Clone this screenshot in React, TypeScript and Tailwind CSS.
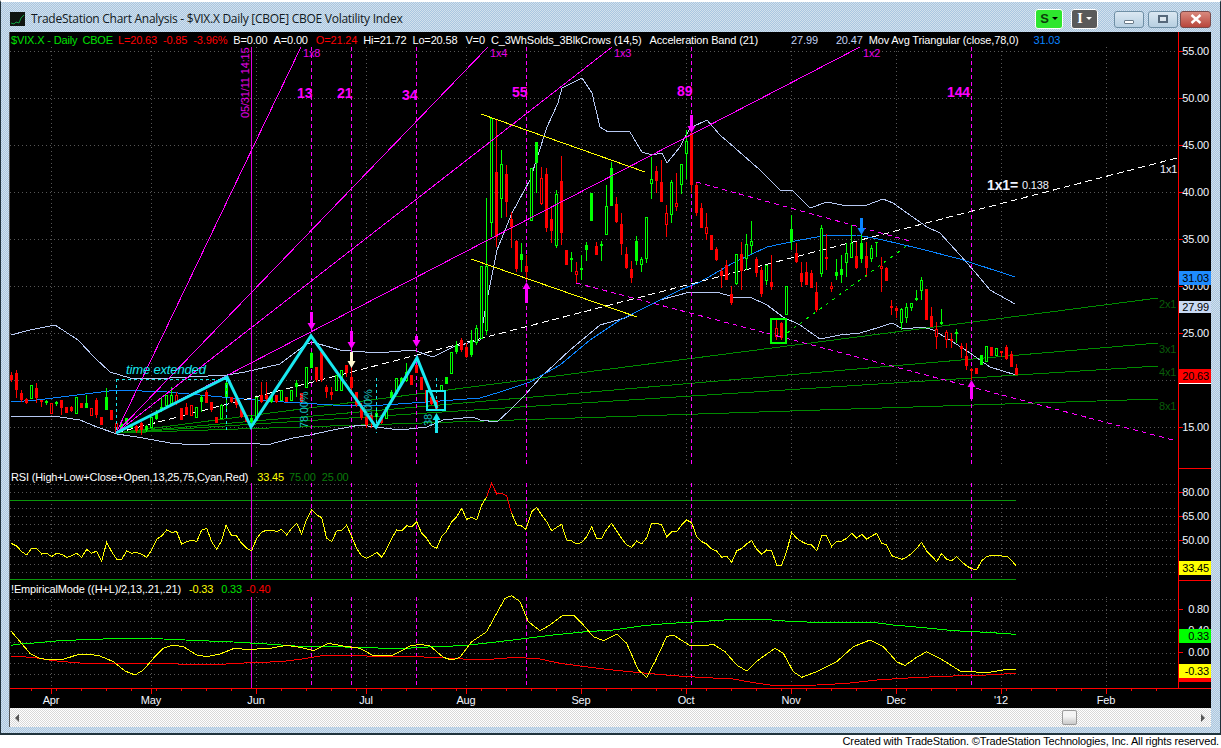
import React from "react";

type Candle = [number, number, number, number, number, number];
// x, high, low, bodyTop, bodyBottom, kind (0 solid red, 1 hollow red, 2 solid green, 3 hollow green)
const CANDLES: Candle[] = [
  [11,372,382,375,380,0],[16,370,398,373,390,0],[21,390,402,393,400,0],[26,398,404,399,403,0],[31,385,398,385,398,3],[36,383,403,388,398,0],
  [41,400,407,400,402,0],[46,400,405,401,403,2],[51,403,413,403,413,1],[56,401,406,402,404,2],[61,400,415,400,408,0],[66,407,413,407,413,0],
  [71,406,412,407,411,0],[76,397,413,397,413,3],[81,403,408,403,408,0],[86,395,408,403,408,2],[91,408,415,408,415,1],[96,398,418,400,415,0],
  [101,417,425,417,425,0],[106,388,410,397,410,2],[111,410,420,410,420,0],[116,423,432,423,432,1],[121,421,430,424,428,2],[126,418,424,418,424,2],
  [131,424,428,424,428,2],[136,425,433,426,431,0],[141,422,435,423,430,0],[146,425,432,426,430,2],[151,417,427,417,427,3],[156,410,420,412,419,2],
  [161,397,412,407,411,2],[166,395,405,395,405,3],[171,387,405,395,403,3],[176,392,405,395,402,1],[181,408,420,408,420,0],[186,403,415,407,415,0],
  [191,405,415,405,415,1],[196,407,417,407,417,3],[201,395,412,397,402,2],[206,390,403,392,403,0],[211,402,412,402,410,0],[216,417,423,417,423,0],
  [221,404,418,405,418,3],[226,378,412,383,397,2],[231,397,403,397,402,0],[236,397,408,398,405,0],[241,408,418,408,417,0],[246,415,422,415,422,0],
  [251,415,426,418,422,2],[256,397,420,397,420,3],[261,382,403,395,402,0],[266,382,403,395,399,0],[271,395,403,396,402,2],[276,395,403,395,402,0],
  [281,390,400,390,400,3],[286,397,402,397,402,0],[291,390,400,390,400,3],[296,380,397,383,387,2],[301,393,403,393,402,0],[306,367,387,367,387,3],
  [311,352,368,353,368,2],[316,367,382,367,380,0],[321,352,382,352,380,0],[326,385,398,387,392,0],[331,387,400,392,395,0],[336,375,390,375,390,3],
  [341,370,390,370,390,3],[346,365,377,365,373,0],[351,363,390,377,388,0],[356,392,407,392,405,0],[361,403,420,405,418,0],[366,415,428,417,425,0],
  [371,413,428,415,420,0],[376,407,420,413,417,2],[381,417,424,418,423,0],[386,407,418,407,418,3],[391,390,400,392,398,2],[396,378,393,378,393,3],
  [401,377,385,378,384,2],[406,363,382,372,380,3],[411,375,385,375,385,0],[416,365,373,365,373,0],[421,377,390,377,390,0],[426,390,403,390,403,0],
  [431,397,405,397,404,0],[436,400,410,400,410,0],[441,385,390,385,390,3],[446,377,384,377,384,2],[451,352,373,352,373,3],[456,341,354,345,352,2],
  [461,338,352,340,350,0],[466,343,358,347,357,0],[471,330,357,340,355,2],[476,325,345,328,342,3],[481,266,338,266,338,3],[486,198,335,266,330,3],
  [491,118,237,118,222,3],[496,120,247,172,237,0],[501,150,218,164,198,3],[506,165,217,174,202,0],[511,212,248,219,227,0],[516,240,272,241,269,0],
  [521,243,272,254,260,2],[526,255,280,266,272,0],[531,168,220,168,220,3],[536,142,193,142,163,2],[541,167,205,178,203,1],[546,168,232,174,228,0],
  [551,208,243,219,231,0],[556,190,248,194,245,3],[561,156,245,181,233,0],[566,250,265,250,265,0],[571,252,272,258,260,2],[576,262,283,271,274,1],
  [581,255,280,268,270,2],[586,242,261,245,250,2],[591,193,221,193,221,2],[596,242,255,246,255,0],[601,241,261,244,246,2],[606,185,235,206,234,3],
  [611,162,206,168,206,2],[616,197,223,204,222,0],[621,213,255,224,244,0],[626,247,269,254,268,0],[631,261,283,269,278,0],[636,236,265,241,261,2],
  [641,257,272,259,264,3],[646,217,263,217,258,3],[651,157,199,179,183,3],[656,166,193,171,181,0],[661,160,202,182,202,0],[666,205,237,213,224,1],
  [671,180,223,182,214,3],[676,173,211,203,206,1],[681,164,194,164,184,3],[686,130,179,141,153,3],[691,115,193,133,185,0],[696,182,216,185,213,0],
  [701,203,228,208,228,0],[706,213,240,227,233,1],[711,235,250,235,250,0],[716,247,261,249,260,0],[721,268,288,271,276,0],[726,260,280,265,280,0],
  [731,286,305,294,303,0],[736,254,285,254,283,3],[741,242,290,254,271,0],[746,234,270,244,258,3],[751,221,254,241,245,3],[756,257,277,259,273,0],
  [761,267,297,270,294,0],[766,265,285,265,280,3],[771,255,290,282,287,0],[776,319,340,328,336,1],[781,322,340,323,338,0],[786,286,314,286,314,3],
  [791,215,250,229,242,2],[796,243,263,253,262,0],[801,262,287,273,282,0],[806,262,285,272,285,0],[811,270,288,273,288,0],[816,282,312,292,310,0],
  [821,225,277,228,273,3],[826,234,270,257,259,0],[831,282,292,286,288,1],[836,259,280,272,276,2],[841,255,283,269,275,2],[846,243,277,253,262,3],
  [851,225,258,243,257,3],[856,242,269,256,268,0],[861,218,263,243,259,2],[866,242,277,256,268,0],[871,245,262,248,258,3],[876,242,257,242,243,2],
  [881,257,292,266,268,1],[886,267,281,268,281,0],[891,300,315,306,308,0],[896,306,318,308,311,0],[901,308,330,309,322,3],[906,303,323,307,317,3],
  [911,303,311,303,307,3],[916,290,301,298,300,2],[921,277,300,280,290,3],[926,289,320,289,320,0],[931,307,327,316,327,0],[936,322,349,329,336,1],
  [941,309,325,322,324,2],[946,330,348,332,339,1],[951,333,348,339,341,0],[956,329,343,332,334,2],[961,343,358,346,349,0],[966,343,370,356,366,0],
  [971,368,380,369,371,0],[976,368,374,368,374,0],[981,355,365,355,365,2],[986,346,361,346,361,3],[991,347,356,347,356,0],[996,348,355,348,355,3],
  [1001,351,357,351,353,0],[1006,345,360,347,359,0],[1011,351,367,354,367,0],[1016,364,375,368,375,0],
];

const zz = (x0: number, y0: number, a: number[][]) => a.map(([x, y]) => `${x0 + x / 3},${y0 + y / 3}`).join(" ");
const raw = (a: number[][]) => a.map(([x, y]) => `${x},${y}`).join(" ");

const UPPER = [[11,335],[30,330],[55,325],[78,340],[95,358],[110,372],[130,378],[170,378],[227,375],[245,372],[280,364],[305,345],[312,342],[340,350],[377,353],[413,350],[433,357],[453,347],[480,340],[487,300],[497,250],[512,213],[530,180],[547,127],[558,103],[562,88],[582,78],[592,93],[600,127],[608,132],[622,131],[630,132],[642,152],[652,155],[662,153],[667,163],[680,147],[690,128],[707,120],[720,135],[735,148],[760,170],[780,190],[792,190],[810,208],[827,202],[847,206],[867,205],[883,199],[893,203],[907,213],[927,227],[940,233],[960,255],[975,272],[990,290],[1015,304]];
const LOWER = [[11,416],[40,416],[60,417],[80,420],[97,427],[117,434],[143,438],[170,443],[193,445],[227,443],[253,443],[267,445],[293,438],[310,435],[333,430],[360,425],[400,430],[427,427],[443,420],[473,417],[480,420],[497,422],[510,410],[525,395],[540,378],[570,350],[600,325],[625,318],[640,310],[660,300],[690,292],[717,292],[733,297],[750,297],[767,305],[783,317],[800,325],[820,339],[840,335],[860,333],[877,328],[892,323],[903,329],[923,327],[933,330],[950,340],[970,353],[990,367],[1016,375]];
const BLUE = [[11,402],[37,400],[117,390],[167,392],[233,398],[267,401],[333,405],[383,405],[427,402],[480,398],[500,392],[530,382],[560,365],[590,340],[620,320],[650,305],[680,290],[700,282],[733,263],[767,247],[800,240],[823,236],[857,235],[883,240],[917,248],[960,259],[1015,277]];

const RSI_A = [[33,220],[50,228],[65,245],[80,255],[95,235],[110,235],[125,252],[140,250],[155,260],[170,250],[185,253],[200,262],[215,257],[230,250],[245,262],[260,238],[275,250],[290,243],[305,273],[320,217],[335,245],[350,268],[365,268],[380,243],[395,250],[410,247],[425,253],[440,262],[455,240],[470,208],[485,198],[500,180],[515,187],[530,185],[545,222],[560,215],[575,210],[590,215],[605,180],[620,175],[635,215],[650,238],[665,212],[678,165],[695,197],[710,198],[725,220],[740,235],[755,242],[770,205],[785,187],[800,180],[815,180],[830,185],[845,178],[860,195],[875,175],[890,160],[905,192],[920,148],[935,118],[950,135],[965,143],[980,205],[995,215],[1010,183],[1025,182],[1040,165],[1055,200],[1070,235],[1085,258],[1100,265],[1115,257],[1130,247],[1145,262],[1160,237],[1175,205],[1190,180],[1205,183],[1220,167],[1235,170],[1250,155],[1265,190],[1280,205],[1295,228],[1310,235],[1325,200],[1340,183],[1355,155],[1370,140],[1385,115],[1400,148],[1415,142],[1430,150],[1445,105],[1460,80]];
const RSI_R = [[1460,80],[1475,40],[1490,72],[1505,70],[1520,78],[1535,130]];
const RSI_B = [[1535,130],[1550,165],[1560,167]];
const RSI_C = [[0,165],[18,178],[35,125],[50,112],[65,135],[80,155],[95,182],[110,172],[125,163],[140,210],[155,213],[170,222],[185,218],[200,200],[215,170],[230,205],[245,205],[260,178],[275,160],[290,183],[305,205],[320,225],[335,232],[350,213],[365,222],[380,203],[395,160],[410,160],[425,165],[440,200],[455,185],[470,185],[485,165],[500,150],[515,158],[530,200],[545,215],[560,222],[575,237],[590,243],[605,262],[620,258],[635,277],[650,243],[665,235],[680,222],[695,212],[710,238],[725,253],[740,240],[755,243],[770,285],[785,285],[800,245],[815,187],[830,205],[845,215],[860,222],[875,225],[890,242],[905,197],[920,198],[935,230],[950,213],[965,213],[980,205],[995,190],[1010,205],[1025,193],[1040,208],[1055,198],[1070,190],[1085,220],[1100,225],[1115,257],[1130,263],[1145,268],[1160,262],[1175,250],[1190,235],[1205,217],[1220,243],[1235,258],[1250,275],[1265,250],[1280,268],[1295,272],[1310,260],[1325,275],[1340,288],[1355,296],[1370,300],[1385,272],[1400,260],[1415,255],[1430,255],[1445,258],[1460,258],[1475,272],[1488,287]];

const EM_G = [zz(0,570,[[33,226],[60,222],[115,218],[180,212],[280,208],[370,205],[490,207],[600,212],[700,216],[800,222],[900,229],[1000,230],[1100,233],[1200,236]]), zz(400,580,[[100,200],[190,197],[280,187],[380,175],[460,165],[560,155],[640,150],[730,137],[810,130],[900,125],[1000,118],[1090,118],[1180,125],[1260,127]]), zz(820,570,[[160,157],[220,165],[300,172],[400,182],[500,187],[588,193]])].join(" ");
const EM_R = [zz(0,570,[[33,259],[100,262],[160,272],[250,280],[350,280],[460,280],[570,283],[660,283],[750,278],[840,275],[900,268],[960,258],[1050,256],[1100,258],[1200,258]]), zz(400,580,[[120,233],[240,240],[350,232],[420,237],[480,250],[540,258],[620,268],[720,278],[820,287],[900,292],[1000,297],[1060,308],[1130,318],[1250,315]]), zz(820,570,[[80,340],[170,330],[280,323],[400,318],[500,315],[588,310]])].join(" ");
const EM_Y = [zz(0,570,[[33,183],[60,215],[90,250],[120,265],[150,270],[190,268],[230,255],[270,253],[300,258],[340,275],[375,303],[405,315],[430,300],[460,265],[490,235],[520,225],[550,230],[590,255],[620,260],[660,252],[700,236],[750,238],[810,235],[860,226],[900,232],[940,242],[985,220],[1030,228],[1080,235],[1120,257],[1180,255],[1200,245]]), zz(400,580,[[30,198],[60,193],[90,198],[130,232],[155,240],[180,232],[215,185],[260,155],[290,100],[315,55],[335,47],[360,65],[385,125],[420,152],[450,135],[490,105],[520,105],[550,135],[580,170],[610,182],[650,162],[680,190],[715,270],[740,292],[765,245],[800,170],[820,165],[870,197],[910,198],[940,193],[975,215],[1010,255],[1040,273],[1075,240],[1125,205],[1150,220],[1180,275],[1205,292],[1250,275]]), zz(820,570,[[50,275],[100,230],[150,210],[190,230],[230,275],[255,287],[285,265],[320,245],[360,265],[420,303],[500,308],[550,300],[588,297]])].join(" ");

const MONTHS: [string, number][] = [["Apr",51],["May",151],["Jun",256],["Jul",366],["Aug",466],["Sep",581],["Oct",686],["Nov",791],["Dec",896],["'12",1001],["Feb",1106]];
const DASHED = [311, 351, 416, 526, 691, 971];
const MAG = "#ff00ff";
const AX = "#f2f6ff";
const LAV = "#b6c8f2";
const CYAN = "#19e8f0";
const TEAL = "#14c0c0";

function Grid({ x = [], ys, y1, y2 }: { x?: number[]; ys: number[]; y1: number; y2: number }) {
  return (
    <g stroke="#565656" strokeDasharray="1 3" shapeRendering="crispEdges">
      {ys.map((y) => <line key={y} x1={10} x2={1178} y1={y + 0.5} y2={y + 0.5} />)}
      {x.map((v) => <line key={v} x1={v + 0.5} x2={v + 0.5} y1={y1} y2={y2} />)}
    </g>
  );
}

function VLines({ y1, y2 }: { y1: number; y2: number }) {
  return (
    <g shapeRendering="crispEdges" stroke={MAG}>
      <line x1={251.5} x2={251.5} y1={y1} y2={y2} stroke="#e000e0" />
      {DASHED.map((x) => <line key={x} x1={x + 0.5} x2={x + 0.5} y1={y1} y2={y2} strokeDasharray="4 3" />)}
    </g>
  );
}

function Line({ p, c, w = 1, d, soft }: { p: string; c: string; w?: number; d?: string; soft?: boolean }) {
  return <polyline points={p} fill="none" stroke={c} strokeWidth={w} strokeDasharray={d} shapeRendering={soft ? undefined : "crispEdges"} strokeLinejoin="miter" />;
}

function Arrow({ x, y1, y2, c, up }: { x: number; y1: number; y2: number; c: string; up?: boolean }) {
  const cx = x + 0.5;
  return up ? (
    <polygon points={`${cx},${y1} ${cx + 4},${y1 + 7} ${cx + 1.5},${y1 + 7} ${cx + 1.5},${y2} ${cx - 1.5},${y2} ${cx - 1.5},${y1 + 7} ${cx - 4},${y1 + 7}`} fill={c} />
  ) : (
    <polygon points={`${cx},${y2} ${cx + 4},${y2 - 7} ${cx + 1.5},${y2 - 7} ${cx + 1.5},${y1} ${cx - 1.5},${y1} ${cx - 1.5},${y2 - 7} ${cx - 4},${y2 - 7}`} fill={c} />
  );
}

function AxisText({ y, t, c = AX }: { y: number; t: string; c?: string }) {
  return <text x={1209} y={y + 4} textAnchor="end" fill={c} className="text-[11px]">{t}</text>;
}

function Flag({ y1, y2, t, bg, c = "#000" }: { y1: number; y2: number; t: string; bg: string; c?: string }) {
  return (
    <g>
      <rect x={1179} y={y1} width={32} height={y2 - y1} fill={bg} />
      <text x={1209} y={(y1 + y2) / 2 + 4} textAnchor="end" fill={c} className="text-[11px]">{t}</text>
    </g>
  );
}

function Axis({ y1, y2, ticks }: { y1: number; y2: number; ticks: number[] }) {
  return (
    <g shapeRendering="crispEdges" stroke="#ff0000">
      <line x1={1178.5} x2={1178.5} y1={y1} y2={y2} strokeWidth={1} />
      {ticks.map((y) => <line key={y} x1={1179} x2={1183} y1={y + 0.5} y2={y + 0.5} />)}
    </g>
  );
}

function Pane({ y0, h, legend, children }: { y0: number; h: number; legend: React.ReactNode; children: React.ReactNode }) {
  return (
    <div className="relative" style={{ height: h }}>
      <svg width={1201} height={h} viewBox={`10 ${y0} 1201 ${h}`} className="block bg-black">{children}</svg>
      {legend}
    </div>
  );
}

function PriceChart() {
  const price = [55, 50, 45, 40, 35, 30, 25, 20, 15].map((p) => 51 + (55 - p) * 9.4);
  const origin = [116, 433];
  const fan = (x2: number, y2: number) => `${origin[0]},${origin[1]} ${x2},${y2}`;
  return (
    <>
      <Grid x={MONTHS.map((m) => m[1])} ys={price} y1={47} y2={467} />
      <Line p={fan(1158, 298)} c="#008a00" />
      <Line p={fan(1158, 343)} c="#008a00" />
      <Line p={fan(1158, 366)} c="#008a00" />
      <Line p={fan(1158, 399)} c="#008a00" />
      <Line p={raw(UPPER)} c={LAV} />
      <Line p={raw(LOWER)} c={LAV} />
      <Line p={raw(BLUE)} c="#0a84ff" w={1} />
      <Line p={fan(1177, 158)} c="#ffffff" d="7 4" />
      <VLines y1={47} y2={467} />
      <g shapeRendering="crispEdges">
        {CANDLES.map(([x, hi, lo, top, bot, k]) => {
          const c = k < 2 ? "#ff0000" : "#00ff00";
          return (
            <g key={x}>
              <line x1={x + 0.5} x2={x + 0.5} y1={hi} y2={lo} stroke={c} />
              {k % 2 === 0 ? (
                <rect x={x - 1} y={top} width={3} height={Math.max(bot - top, 1)} fill={c} />
              ) : (
                <rect x={x - 0.5} y={top + 0.5} width={2} height={Math.max(bot - top, 1)} fill="#000" stroke={c} />
              )}
            </g>
          );
        })}
      </g>
      <Line p={fan(301, 47)} c={MAG} />
      <Line p={fan(488, 47)} c={MAG} />
      <Line p={fan(612, 47)} c={MAG} />
      <Line p={fan(860, 47)} c={MAG} />
      <Line p="481,114 645,172" c="#ffff00" />
      <Line p="471,259 637,317" c="#ffff00" />
      <Line p="576,283 1173,440" c={MAG} d="5 4" />
      <Line p="696,182 910,241" c={MAG} d="5 4" />
      <Line p="787,333 908,245" c="#00ff00" d="3 5" />
      <Line p="116,433 227,377 251,427 311,336 376,427 417,358 437,408" c={CYAN} w={3} soft />
      <g stroke={CYAN} strokeDasharray="3 3" shapeRendering="crispEdges">
        <line x1={116.5} x2={116.5} y1={379} y2={433} />
        <line x1={226.5} x2={226.5} y1={379} y2={433} />
        <line x1={116} x2={226} y1={379.5} y2={379.5} />
        <line x1={376.5} x2={376.5} y1={378} y2={433} />
        <line x1={436.5} x2={436.5} y1={378} y2={410} />
      </g>
      <rect x={427} y={391} width={18} height={19} fill="none" stroke={CYAN} strokeWidth={2} shapeRendering="crispEdges" />
      <rect x={771} y={319} width={15} height={24} fill="none" stroke="#00ff00" strokeWidth={2} shapeRendering="crispEdges" />
      <Arrow x={311} y1={312} y2={330} c={MAG} />
      <Arrow x={351} y1={331} y2={349} c={MAG} />
      <Arrow x={351} y1={352} y2={368} c="#fff8d0" />
      <Arrow x={416} y1={336} y2={347} c={MAG} />
      <Arrow x={691} y1={115} y2={133} c={MAG} />
      <Arrow x={861} y1={218} y2={235} c="#0a84ff" />
      <Arrow x={526} y1={282} y2={303} c={MAG} up />
      <Arrow x={971} y1={380} y2={399} c={MAG} up />
      <Arrow x={436} y1={413} y2={433} c={CYAN} up />
      {[["13",297,98],["21",337,98],["34",402,100],["55",512,97],["89",677,96],["144",947,97]].map(([t, x, y]) => (
        <text key={t as string} x={x as number} y={y as number} fill={MAG} className="text-[14px] font-bold">{t}</text>
      ))}
      {[["1x8",303],["1x4",490],["1x3",614],["1x2",863]].map(([t, x]) => (
        <text key={t as string} x={x as number} y={57} fill="#e800e8" className="text-[11px]">{t}</text>
      ))}
      {[["2x1",304],["3x1",349],["4x1",372],["8x1",406]].map(([t, y]) => (
        <text key={t as string} x={1159} y={(y as number) + 4} fill="#0a5c0a" className="text-[11px]">{t}</text>
      ))}
      <text x={1160} y={173} fill="#f0f0ff" className="text-[11px]">1x1</text>
      <text x={987} y={190} fill="#f0f4ff" className="text-[14px] font-bold">1x1=</text>
      <text x={1022} y={189} fill="#f0f4ff" className="text-[11px]">0.138</text>
      <text x={126} y={374} fill={CYAN} className="text-[13px] italic">time extended</text>
      <text transform="translate(249,118) rotate(-90)" fill="#e800e8" className="text-[11px]">05/31/11 14:15</text>
      <text transform="translate(308,428) rotate(-90)" fill={TEAL} className="text-[11px]">78.00%</text>
      <text transform="translate(372,417) rotate(-90)" fill={TEAL} className="text-[11px]">100%</text>
      <text transform="translate(432,426) rotate(-90)" fill={TEAL} className="text-[11px]">38</text>
      <Axis y1={32} y2={469} ticks={price} />
      <line x1={1179} x2={1211} y1={468.5} y2={468.5} stroke="#ff0000" shapeRendering="crispEdges" />
      {[55, 50, 45, 40, 35, 30, 25, 15].map((p) => <AxisText key={p} y={51 + (55 - p) * 9.4} t={`${p}.00`} />)}
      <Flag y1={271} y2={285} t="31.03" bg="#1e8cff" />
      <Flag y1={301} y2={313} t="27.99" bg="#c9d9f3" />
      <Flag y1={369} y2={383} t="20.63" bg="#ff0000" />
      <line x1={1179} x2={1211} y1={383.5} y2={383.5} stroke="#fff" shapeRendering="crispEdges" />
    </>
  );
}

function RsiChart() {
  const ys = [484, 492, 508, 516, 524, 532, 540, 548, 556, 564, 572];
  return (
    <>
      <Grid x={MONTHS.map((m) => m[1])} ys={ys} y1={484} y2={579} />
      <line x1={10} x2={1016} y1={500.5} y2={500.5} stroke="#0a960a" shapeRendering="crispEdges" />
      <line x1={10} x2={1016} y1={579.5} y2={579.5} stroke="#0a960a" shapeRendering="crispEdges" />
      <VLines y1={483} y2={579} />
      <Line p={zz(0, 470, RSI_A)} c="#ffff00" />
      <Line p={zz(0, 470, RSI_R)} c="#ff0000" />
      <Line p={zz(0, 470, RSI_B)} c="#ffff00" />
      <Line p={zz(520, 470, RSI_C)} c="#ffff00" />
      <Axis y1={469} y2={581} ticks={[492, 516, 540, 564]} />
      <line x1={1179} x2={1211} y1={580.5} y2={580.5} stroke="#ff0000" shapeRendering="crispEdges" />
      <AxisText y={492} t="80.00" />
      <AxisText y={516} t="65.00" />
      <AxisText y={540} t="50.00" />
      <Flag y1={561} y2={575} t="33.45" bg="#ffff00" />
    </>
  );
}

function EmpiricalChart() {
  return (
    <>
      <Grid x={MONTHS.map((m) => m[1])} ys={[599, 610, 621, 631, 642, 653, 663, 674]} y1={597} y2={688} />
      <VLines y1={597} y2={688} />
      <Line p={EM_G} c="#00ff00" />
      <Line p={EM_R} c="#ff0000" />
      <Line p={EM_Y} c="#ffff00" />
      <Axis y1={581} y2={688} ticks={[609, 630, 652, 673]} />
      <AxisText y={609} t="0.80" />
      <AxisText y={630} t="0.40" />
      <AxisText y={652} t="0.00" />
      <Flag y1={629} y2={643} t="0.33" bg="#00ff00" />
      <rect x={1179} y={678} width={32} height={4} fill="#ff0000" />
      <Flag y1={664} y2={678} t="-0.33" bg="#ffff00" />
    </>
  );
}

function TimeAxis() {
  const weekly = Array.from({ length: 47 }, (_, i) => 31 + i * 25);
  return (
    <svg width={1201} height={20} viewBox="10 688 1201 20" className="block bg-black">
      <g stroke="#ff0000" shapeRendering="crispEdges">
        <line x1={10} x2={1211} y1={688.5} y2={688.5} strokeWidth={1} />
        {weekly.filter((x) => x < 1178).map((x) => <line key={x} x1={x + 0.5} x2={x + 0.5} y1={689} y2={691} />)}
        {MONTHS.map(([, x]) => <line key={x} x1={x + 0.5} x2={x + 0.5} y1={689} y2={694} />)}
      </g>
      {MONTHS.map(([t, x]) => (
        <text key={t} x={x} y={704} textAnchor="middle" fill={AX} className="text-[11px]">{t}</text>
      ))}
    </svg>
  );
}

function TitleButton({ children, className }: { children: React.ReactNode; className: string }) {
  return <div className={`flex items-center justify-center rounded-[3px] ${className}`}>{children}</div>;
}

export default function App() {
  const dither = "bg-[conic-gradient(#d3e1ec_25%,#a9c6e1_0_50%,#d3e1ec_0_75%,#a9c6e1_0)] bg-size-[2px_2px]";
  return (
    <div className="flex h-[748px] w-[1221px] flex-col overflow-hidden bg-white font-['Liberation_Sans',sans-serif] tracking-[-0.15px]">
      <div className={`flex h-[735px] flex-col border-x border-b-2 border-x-[#20303a] border-b-[#20343c] border-t-2 border-t-white ${dither}`}>
        <div className="flex h-[30px] items-center pl-[9px] pr-[9px] pt-[3px]">
          <svg width={15} height={14} viewBox="0 0 15 14">
            <rect width={15} height={14} fill="#101510" />
            <polyline points="1,11 4,12 6,10 9,11 11,6 14,3" fill="none" stroke="#10a040" />
          </svg>
          <span className="ml-[6px] font-['Open_Sans',sans-serif] text-[12px] tracking-[-0.27px] text-[#101820]">TradeStation Chart Analysis - $VIX.X Daily [CBOE] CBOE Volatility Index</span>
          <div className="ml-auto flex items-start">
            <TitleButton className="h-[20px] w-[28px] gap-[3px] border border-white bg-[#2ee62e]">
              <span className="text-[13px] font-bold text-[#0b3d0b]">S</span>
              <span className="h-0 w-0 border-x-[3px] border-t-[3px] border-x-transparent border-t-black" />
            </TitleButton>
            <TitleButton className="ml-[8px] h-[20px] w-[27px] gap-[3px] border border-white bg-[#5a5a5a]">
              <span className="font-['Liberation_Serif',serif] text-[14px] font-bold leading-none text-white">I</span>
              <span className="h-0 w-0 border-x-[3px] border-t-[3px] border-x-transparent border-t-white" />
            </TitleButton>
            <TitleButton className="ml-[16px] mt-[2px] h-[17px] w-[30px] border border-[#6f8fa5] bg-[linear-gradient(#dbe8f2,#b7cfe1)]">
              <span className="mt-[5px] h-[4px] w-[10px] rounded-[1px] border border-[#6a7a88] bg-white" />
            </TitleButton>
            <TitleButton className="ml-[4px] mt-[2px] h-[17px] w-[30px] border border-[#6f8fa5] bg-[linear-gradient(#dbe8f2,#b7cfe1)]">
              <span className="h-[8px] w-[10px] border-2 border-[#56687a] bg-[#dce6ee]" />
            </TitleButton>
            <TitleButton className="ml-[2px] mt-[2px] h-[17px] w-[31px] border border-[#7a4a4a] bg-[linear-gradient(#d98a7e,#b8463c)]">
              <svg width={12} height={10} viewBox="0 0 12 10">
                <path d="M1.5 1 L10.5 9 M10.5 1 L1.5 9" stroke="#fff" strokeWidth={2.4} />
              </svg>
            </TitleButton>
          </div>
        </div>
        <div className="flex w-full flex-1 flex-col pl-[8px] pr-[9px]">
          <div className="w-[1202px] border-l border-l-[#555]">
            <Pane
              y0={32}
              h={437}
              legend={
                <div className="absolute left-[1px] top-[1px] flex whitespace-nowrap text-[11px] leading-[14px]">
                  <span className="text-[#00e000]">$VIX.X - Daily</span>
                  <span className="ml-[5px] text-[#00e000]">CBOE</span>
                  <span className="ml-[5px] text-[#ff0000]">L=20.63</span>
                  <span className="ml-[6px] text-[#ff0000]">-0.85</span>
                  <span className="ml-[6px] text-[#ff0000]">-3.96%</span>
                  <span className="ml-[6px] text-white">B=0.00</span>
                  <span className="ml-[6px] text-white">A=0.00</span>
                  <span className="ml-[8px] text-[#ff0000]">O=21.24</span>
                  <span className="ml-[6px] text-white">Hi=21.72</span>
                  <span className="ml-[6px] text-white">Lo=20.58</span>
                  <span className="ml-[8px] text-white">V=0</span>
                  <span className="ml-[6px] text-white">C_3WhSolds_3BlkCrows (14,5)</span>
                  <span className="ml-[8px] text-white">Acceleration Band (21)</span>
                  <span className="ml-[33px] text-[#c3d3f5]">27.99</span>
                  <span className="ml-[18px] text-[#c3d3f5]">20.47</span>
                  <span className="ml-[6px] text-white">Mov Avg Triangular (close,78,0)</span>
                  <span className="ml-[15px] text-[#0a84ff]">31.03</span>
                </div>
              }
            >
              <PriceChart />
            </Pane>
            <Pane
              y0={469}
              h={112}
              legend={
                <div className="absolute left-[1px] top-[1px] flex whitespace-nowrap text-[11px] leading-[14px]">
                  <span className="text-white">RSI (High+Low+Close+Open,13,25,75,Cyan,Red)</span>
                  <span className="ml-[9px] text-[#ffff00]">33.45</span>
                  <span className="ml-[5px] text-[#0a7a0a]">75.00</span>
                  <span className="ml-[6px] text-[#0a7a0a]">25.00</span>
                </div>
              }
            >
              <RsiChart />
            </Pane>
            <Pane
              y0={581}
              h={107}
              legend={
                <div className="absolute left-[1px] top-[1px] flex whitespace-nowrap text-[11px] leading-[14px]">
                  <span className="text-white">!EmpiricalMode ((H+L)/2,13,.21,.21)</span>
                  <span className="ml-[8px] text-[#ffff00]">-0.33</span>
                  <span className="ml-[8px] text-[#00e000]">0.33</span>
                  <span className="ml-[4px] text-[#ff0000]">-0.40</span>
                </div>
              }
            >
              <EmpiricalChart />
            </Pane>
            <TimeAxis />
          </div>
          <div className="flex h-[19px] w-[1202px] items-center border-l border-l-[#555] bg-[conic-gradient(#ffffff_25%,#d8d8d8_0_50%,#ffffff_0_75%,#d8d8d8_0)] bg-size-[2px_2px] pl-[5px] pr-[6px]">
            <span className="h-0 w-0 border-y-[4px] border-r-[4px] border-y-transparent border-r-[#555]" />
            <span className="ml-[1043px] h-[15px] w-[15px] rounded-[2px] border border-[#9a9a9a] bg-[linear-gradient(#f4f4f4_40%,#c9c9c9)]" />
            <span className="ml-auto h-0 w-0 border-y-[4px] border-l-[4px] border-y-transparent border-l-[#555]" />
          </div>
        </div>
      </div>
      <div className="flex flex-1 items-center justify-end pr-[2px] text-[11px] leading-none text-black">
        Created with TradeStation. ©TradeStation Technologies, Inc. All rights reserved.
      </div>
    </div>
  );
}
